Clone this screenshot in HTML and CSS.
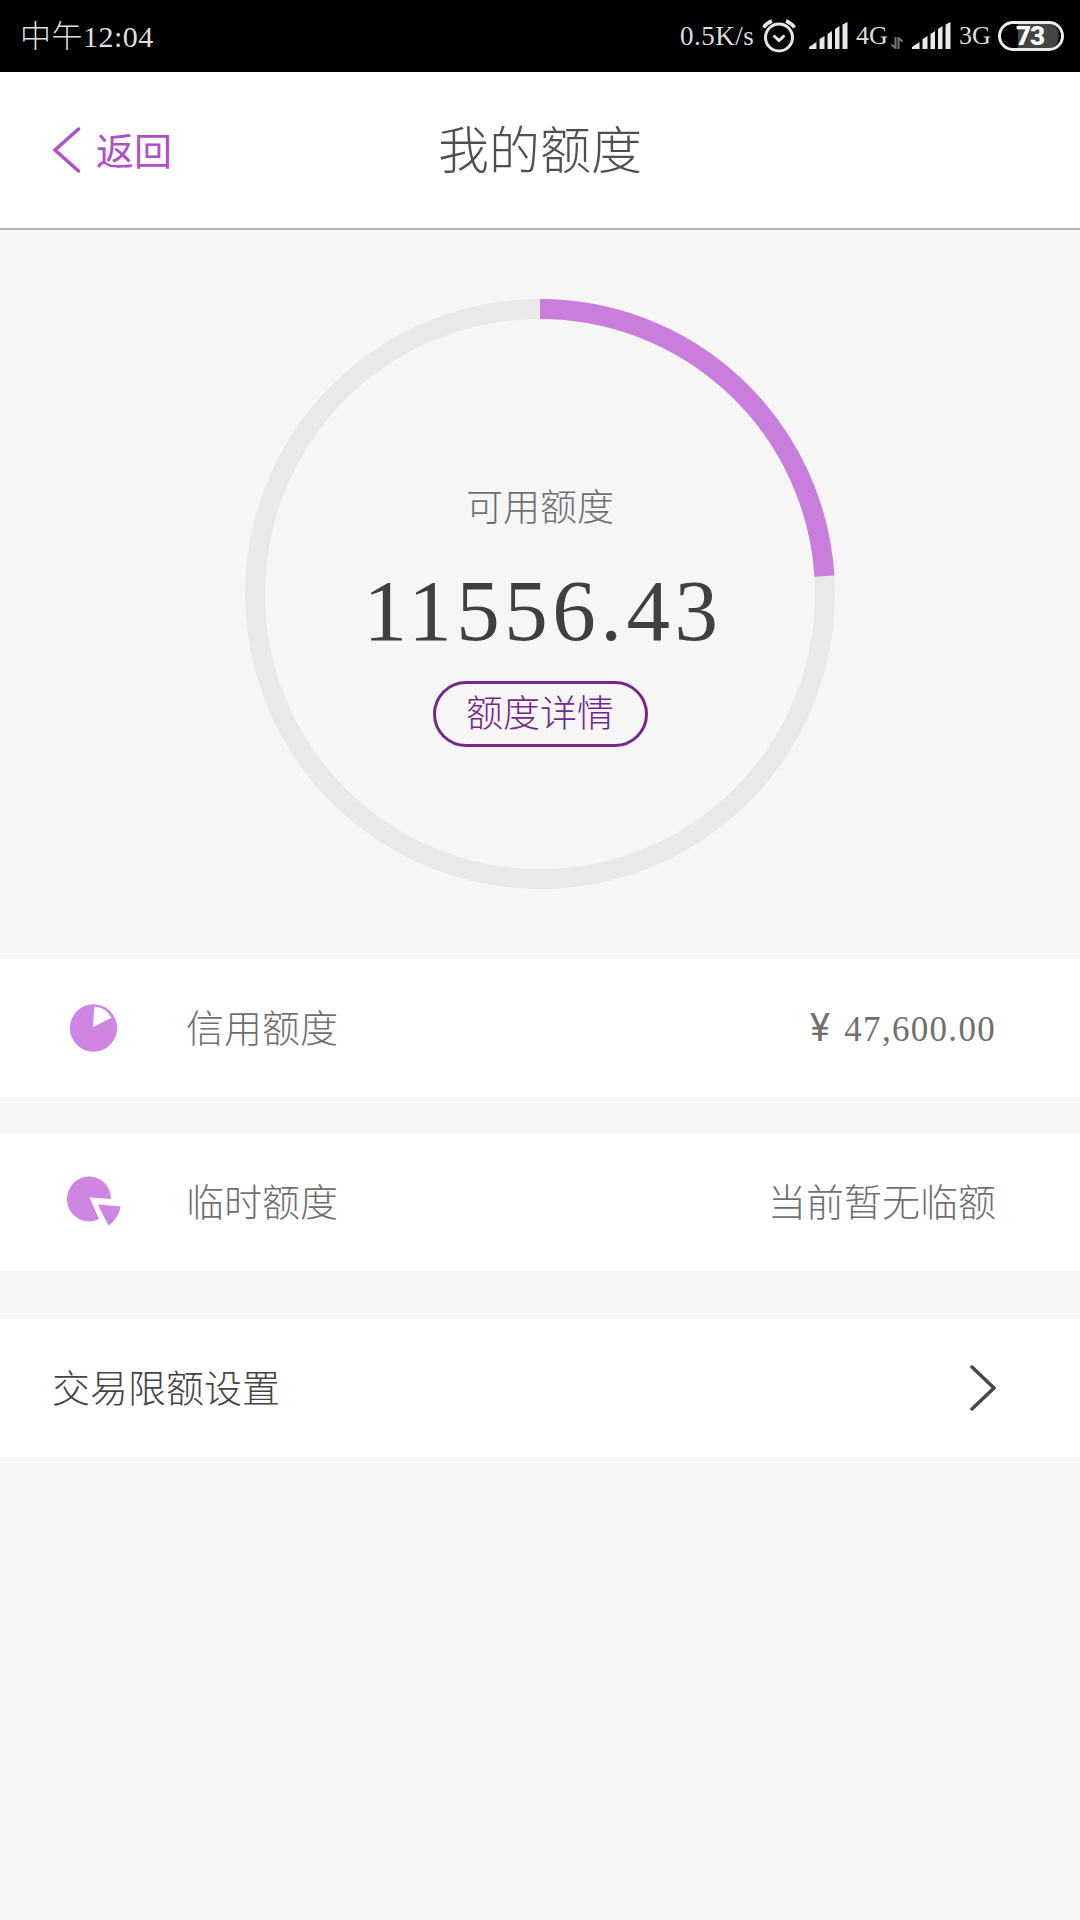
FILE: index.html
```
<!DOCTYPE html>
<html lang="zh-CN">
<head>
    <meta charset="UTF-8">
    <meta name="viewport" content="width=device-width, initial-scale=1.0">
    <title>我的额度</title>
    <link rel="stylesheet" href="styles.css">
</head>
<body>
    <div class="status-bar">
        <div class="clock"><span class="clock-period">中午</span>12:04</div>
        <div class="status-icons">
            <span class="speed">0.5K/s</span>
            <svg class="alarm" width="34" height="34" viewBox="0 0 34 34" fill="none" stroke="#e8e8e8" stroke-width="3">
                <circle cx="17" cy="18.5" r="13.5"/>
                <path d="M11.5 16.5l5.5 5 5.5-5"/>
                <path d="M1.5 8.5Q4.500 4 10 2M32.500 8.500Q29.500 4 24 2" stroke-width="3.500"/>
            </svg>
            <svg class="signal" width="39" height="28" viewBox="0 0 39 28" fill="#e8e8e8">
                <path d="M0 27v-2l7.500-5v7zM10.500 27V17l5-3v13zM18.500 27V12l4.500-3v18zM26 27V7l4.500-3v23zM33.500 27V2.500l5-2.500v27z"/>
            </svg>
            <span class="network network-4g">4G</span>
            <svg class="transfer" width="12" height="12" viewBox="0 0 12 12" fill="none" stroke="#777" stroke-width="2">
                <path d="M4.500 0v11L.5 7.500M7.500 12V1l4 3.500"/>
            </svg>
            <svg class="signal" width="39" height="28" viewBox="0 0 39 28" fill="#e8e8e8">
                <path d="M0 27v-2l7.500-5v7zM10.500 27V17l5-3v13zM18.500 27V12l4.500-3v18zM26 27V7l4.500-3v23zM33.500 27V2.500l5-2.500v27z"/>
            </svg>
            <span class="network network-3g">3G</span>
            <div class="battery">73</div>
        </div>
    </div>

    <header class="header">
        <a class="back">
            <svg width="28" height="48" viewBox="0 0 28 48" fill="none" stroke="#b04fc8" stroke-width="3.500" stroke-linecap="round">
                <path d="M25.500 3L2 24l23.500 21"/>
            </svg>
            <span class="back-text">返回</span>
        </a>
        <h1>我的额度</h1>
    </header>

    <section class="quota">
        <div class="ring">
            <svg class="ring-chart" width="590" height="590" viewBox="0 0 590 590" fill="none" stroke-width="20">
                <circle cx="295" cy="295" r="285" stroke="#e9e9e9"/>
                <circle cx="295" cy="295" r="285" stroke="#c97ddd" pathLength="100" stroke-dasharray="24 76" transform="rotate(-90 295 295)"/>
            </svg>
            <div class="ring-content">
                <div class="quota-label">可用额度</div>
                <div class="quota-value">11556.43</div>
                <a class="detail-button">额度详情</a>
            </div>
        </div>
    </section>

    <div class="row">
        <svg class="row-icon" width="56" height="56" viewBox="0 0 56 56">
            <circle cx="27.500" cy="28" r="23.700" fill="#cf86e2"/>
            <path d="M27 27l1.300-20.500Q39 7 45.500 17.700z" fill="#fff"/>
        </svg>
        <span class="row-label">信用额度</span>
        <span class="row-value amount"><span class="yen">¥</span>47,600.00</span>
    </div>

    <div class="row row-temporary">
        <svg class="row-icon" width="56" height="56" viewBox="0 0 56 56" fill="#cf86e2">
            <path d="M23.500 23.500L45 25A22 22.500 0 1 0 33 45z"/>
            <path d="M31.700 30.500L54.500 32.500Q53 44 42.500 51.500z"/>
        </svg>
        <span class="row-label">临时额度</span>
        <span class="row-value">当前暂无临额</span>
    </div>

    <div class="row row-link">
        <span class="row-label">交易限额设置</span>
        <svg class="row-arrow" width="26" height="46" viewBox="0 0 26 46" fill="none" stroke="#484848" stroke-width="3.500" stroke-linecap="round">
            <path d="M2 2l22 21L2 44"/>
        </svg>
    </div>
</body>
</html>
```
FILE: styles.css
```
* {
    box-sizing: border-box;
}

body {
    margin: 0;
    min-height: 1920px;
    background-color: #f6f6f6;
    color: #707070;
    font-family: "Liberation Serif", "Noto Sans CJK SC", serif;
    font-weight: 300;
}

svg {
    display: block;
    flex-shrink: 0;
}

.status-bar {
    display: flex;
    justify-content: space-between;
    align-items: center;
    height: 72px;
    padding: 0 16px 0 20px;
    background-color: #000;
    color: #dedede;
}

.clock {
    display: flex;
    align-items: center;
    font-size: 30px;
    line-height: 72px;
    letter-spacing: 0.5px;
    padding-top: 1px;
}

.clock-period {
    font-size: 31px;
}

.status-icons {
    display: flex;
    align-items: center;
    font-size: 27px;
    line-height: 72px;
}

.speed {
    width: 82px;
    letter-spacing: 0.5px;
}

.alarm {
    margin-right: 13px;
}

.network-4g {
    width: 35px;
    margin-left: 8px;
    font-size: 26px;
}

.network-3g {
    width: 39px;
    margin-left: 8px;
    font-size: 26px;
}

.transfer {
    margin: 14px 9px 0 0;
}

.battery {
    width: 66px;
    height: 30px;
    padding-right: 2px;
    border: 3px solid #ececec;
    border-radius: 15px;
    background: linear-gradient(to right, #000 17px, #444 17px) content-box;
    font-family: Roboto, sans-serif;
    font-size: 26px;
    font-weight: 900;
    letter-spacing: -1px;
    line-height: 24px;
    text-align: center;
    color: #fff;
}

.header {
    display: grid;
    grid-template-columns: 1fr auto 1fr;
    align-items: center;
    height: 158px;
    padding: 0 53px;
    background-color: #fff;
    border-bottom: 2px solid #b4b4b4;
}

.back {
    display: flex;
    align-items: center;
    gap: 15px;
    font-size: 38px;
    font-weight: 400;
    color: #b04fc8;
}

.back-text {
    padding-bottom: 3px;
}

.header h1 {
    margin: 0;
    padding-top: 3px;
    font-size: 51px;
    font-weight: 300;
    line-height: 60px;
    color: #505050;
}

.quota {
    display: flex;
    justify-content: center;
    height: 729px;
    padding-top: 69px;
}

.ring {
    display: grid;
    width: 590px;
    height: 590px;
}

.ring-chart,
.ring-content {
    grid-area: 1 / 1;
}

.ring-content {
    display: flex;
    flex-direction: column;
    align-items: center;
    padding-top: 180px;
}

.quota-label {
    font-size: 37px;
    line-height: 60px;
}

.quota-value {
    margin: 22px 0 20px;
    padding-left: 6px;
    font-size: 87px;
    line-height: 100px;
    letter-spacing: 4.5px;
    color: #404040;
}

.detail-button {
    width: 215px;
    height: 66px;
    border: 3px solid #76278c;
    border-radius: 33px;
    font-size: 37px;
    line-height: 61px;
    text-align: center;
    color: #76278c;
}

.row {
    display: flex;
    align-items: center;
    height: 138px;
    padding: 0 84px 0 66px;
    background-color: #fff;
    font-size: 38px;
    line-height: 60px;
}

.row-icon {
    margin-right: 64px;
}

.row-label,
.row-value {
    padding-top: 2px;
}

.row-value,
.row-arrow {
    margin-left: auto;
}

.amount {
    font-size: 35px;
    letter-spacing: 1.3px;
}

.yen {
    margin-right: 13px;
    font-family: Roboto, sans-serif;
    font-size: 38px;
    font-weight: 400;
}

.row-temporary {
    margin-top: 36px;
}

.row-link {
    margin-top: 48px;
    padding-left: 52px;
    color: #444;
}
```
